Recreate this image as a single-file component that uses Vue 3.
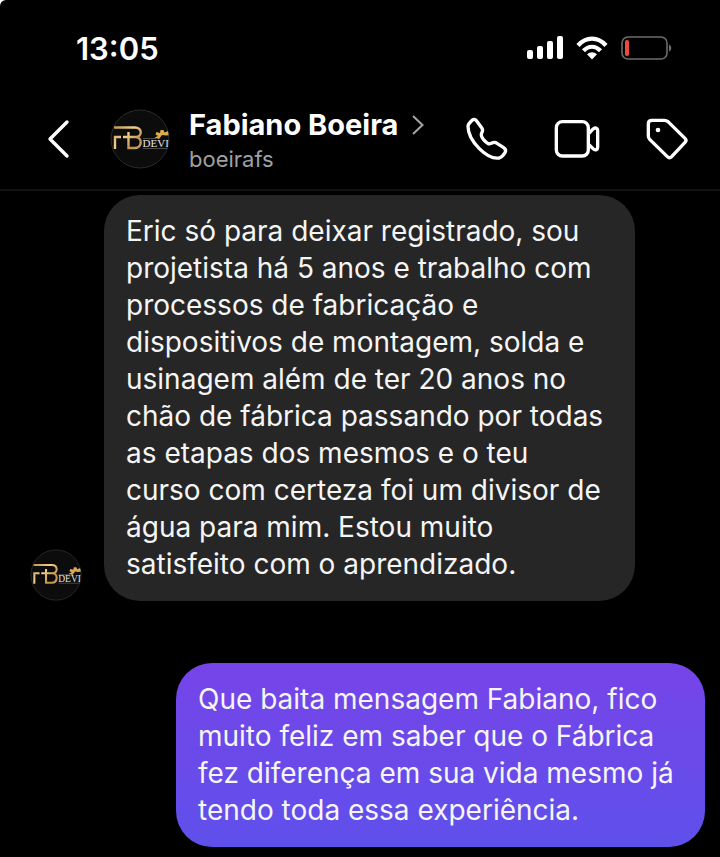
<script setup>
import { h } from 'vue'

const received =
  'Eric só para deixar registrado, sou projetista há 5 anos e trabalho com processos de fabricação e dispositivos de montagem, solda e usinagem além de ter 20 anos no chão de fábrica passando por todas as etapas dos mesmos e o teu curso com certeza foi um divisor de água para mim. Estou muito satisfeito com o aprendizado.'
const sent =
  'Que baita mensagem Fabiano, fico muito feliz em saber que o Fábrica fez diferença em sua vida mesmo já tendo toda essa experiência.'

// Round profile logo, shared by the header and the message list
const Avatar = () =>
  h('svg', { viewBox: '0 0 60 60', 'aria-hidden': 'true' }, [
    h('defs', [
      h('linearGradient', { id: 'gold', x1: 0, y1: 0, x2: 60, y2: 60, gradientUnits: 'userSpaceOnUse' }, [
        h('stop', { offset: '0.1', 'stop-color': '#a87836' }),
        h('stop', { offset: '0.35', 'stop-color': '#f0cf8b' }),
        h('stop', { offset: '0.5', 'stop-color': '#c1924d' }),
        h('stop', { offset: '0.7', 'stop-color': '#e2b66a' })
      ]),
      h('clipPath', { id: 'disc' }, [h('circle', { cx: 30, cy: 30, r: 29 })])
    ]),
    h('circle', { cx: 30, cy: 30, r: 29, fill: '#0c0c0c', stroke: '#2b2b2b', 'stroke-width': 1 }),
    h('g', { 'clip-path': 'url(#disc)' }, [
      h('path', {
        d: 'M4 18.5H25C32.5 18.5 32.5 28 26 28H13M26 28C33 28.5 32 39 25 39H18.5V23M5 40V28H11',
        fill: 'none',
        stroke: 'url(#gold)',
        'stroke-width': 2.4
      }),
      h('path', {
        d: 'M44.5 28.5L48 27L45.5 25.5L46.5 23L50 24L50.5 21L53.500 21L54.500 23.500L58 22L60 24V26L56 26.500L52 26L49 30Z',
        fill: '#dda94e'
      }),
      h('path', { d: 'M33 29.5H46M33 39.5H60', stroke: '#666', 'stroke-width': 0.7 }),
      h('text', { x: 32.6, y: 38, fill: '#e4e4e4', 'font-size': 11, 'font-family': 'Liberation Serif, serif' }, 'DEVI')
    ])
  ])
</script>

<template>
  <div class="screen">
    <div class="status">
      <time>13:05</time>
      <div class="indicators">
        <svg class="signal" viewBox="0 0 36 24" fill="#fff">
          <rect x="0" y="14" width="6" height="9" rx="2" />
          <rect x="10" y="10" width="6" height="13" rx="2" />
          <rect x="20" y="5" width="6" height="18" rx="2" />
          <rect x="30" y="0" width="6" height="23" rx="2" />
        </svg>
        <svg class="wifi" viewBox="0 0 32 24" fill="none" stroke="#fff" stroke-width="4.2">
          <path d="M2 9.5C10 .3 22 .3 30 9.5" />
          <path d="M7.5 14.8C12.5 9.4 19.5 9.4 24.5 14.8" />
          <path d="M16 23.5L11 18.3C14 15.5 18 15.5 21 18.3Z" fill="#fff" stroke="none" />
        </svg>
        <svg class="battery" viewBox="0 0 51 24">
          <rect x="1" y="1" width="45" height="22" rx="6" fill="none" stroke="#6c6c6c" stroke-width="1.6" />
          <path d="M48 8.5C51 9.5 51 14.5 48 15.5Z" fill="#6c6c6c" />
          <rect x="4" y="4" width="4" height="16" rx="1.8" fill="#ec4a3c" />
        </svg>
      </div>
    </div>

    <header class="header">
      <button class="back" aria-label="Voltar">
        <svg viewBox="0 0 24 40"><path d="M20 3L3 20L20 37" /></svg>
      </button>
      <Avatar class="avatar large" />
      <a class="person" href="#">
        <span class="name">
          Fabiano Boeira
          <svg viewBox="0 0 12 20"><path d="M1 1L10.5 10L1 19" /></svg>
        </span>
        <span class="handle">boeirafs</span>
      </a>
      <nav class="actions">
        <button aria-label="Ligar">
          <svg viewBox="0 0 144 144">
            <path d="M15 34C15 27 19 24 27 16C32 12 37 12 41 18L57 40C61 46 59 49 56 54C53 60 55 65 61 73C66 79 72 84 76 86C81 88 85 84 90 83C95 81 98 82 102 85L122 98C128 102 130 106 126 113C121 121 116 127 109 129C92 132 72 124 49 101C26 78 15 56 15 34Z" />
          </svg>
        </button>
        <button aria-label="Chamada de vídeo">
          <svg viewBox="0 0 144 144">
            <rect x="10" y="20" width="96" height="103" rx="18" />
            <path d="M107 56L119 43Q126 36 132 41Q134 43 134 47V97Q134 102 130 104Q125 106 120 101L107 88" />
          </svg>
        </button>
        <button aria-label="Etiqueta">
          <svg viewBox="0 0 144 144">
            <path d="M27 16H64Q70 16 75 20L126 70Q132 76 126 82L86 125Q79 131 73 125L20 73Q16 69 16 64V26Q16 16 27 16Z" />
            <circle class="dot" cx="45" cy="45" r="7" />
          </svg>
        </button>
      </nav>
    </header>

    <main class="chat">
      <div class="row incoming">
        <Avatar class="avatar small" />
        <p class="bubble">{{ received }}</p>
      </div>
      <div class="row outgoing">
        <p class="bubble">{{ sent }}</p>
      </div>
    </main>
  </div>
</template>

<style>
body {
  margin: 0;
  background: #fff;
}
</style>

<style scoped>
.screen {
  min-height: 100vh;
  box-sizing: border-box;
  background: #000;
  color: #fff;
  border-radius: 6px 0 0 0;
  font-family: Inter, 'Liberation Sans', sans-serif;
}
svg {
  display: block;
  flex: none;
}
.status {
  display: flex;
  justify-content: space-between;
  align-items: center;
  height: 96px;
  box-sizing: border-box;
  padding: 0 48px 0 76px;
}
time {
  font-size: 31px;
  font-weight: 600;
}
.indicators {
  display: flex;
  gap: 13px;
}
.signal {
  width: 36px;
  height: 24px;
}
.wifi {
  width: 32px;
  height: 24px;
}
.battery {
  width: 51px;
  height: 24px;
}
.header {
  display: flex;
  align-items: center;
  height: 95px;
  box-sizing: border-box;
  padding: 0 29px 7px 47px;
  border-bottom: 2px solid #121212;
}
button {
  padding: 0;
  border: 0;
  background: none;
}
.back svg {
  width: 24px;
  height: 40px;
}
.back path {
  fill: none;
  stroke: #fff;
  stroke-width: 3.4;
  stroke-linecap: round;
  stroke-linejoin: round;
}
.large {
  width: 60px;
  height: 60px;
  margin: 0 19px 0 39px;
}
.person {
  padding-top: 3px;
  color: inherit;
  text-decoration: none;
}
.name {
  display: flex;
  align-items: center;
  gap: 14px;
  font-size: 29px;
  font-weight: 700;
  line-height: 36px;
  white-space: nowrap;
}
.name svg {
  width: 12px;
  height: 20px;
}
.name path {
  fill: none;
  stroke: #a5a5a5;
  stroke-width: 2;
}
.handle {
  display: block;
  font-size: 22px;
  line-height: 32px;
  color: #a0a0a0;
}
.actions {
  display: flex;
  gap: 42px;
  margin-left: auto;
}
.actions svg {
  width: 48px;
  height: 48px;
  fill: none;
  stroke: #fff;
  stroke-width: 10;
  stroke-linejoin: round;
}
.actions .dot {
  fill: #fff;
  stroke: none;
}
.chat {
  display: flex;
  flex-direction: column;
  gap: 62px;
  padding: 4px 15px 10px 30px;
}
.row {
  display: flex;
  align-items: flex-end;
}
.incoming {
  gap: 22px;
  padding-right: 70px;
}
.outgoing {
  padding-left: 146px;
}
.small {
  width: 52px;
  height: 52px;
}
.bubble {
  flex: 1;
  margin: 0;
  padding: 18px 28px 18px 22px;
  border-radius: 36px;
  background: #262626;
  color: #f5f5f5;
  font-size: 28px;
  line-height: 37px;
}
.outgoing .bubble {
  background: linear-gradient(#7644e8, #5f50eb);
}
</style>
